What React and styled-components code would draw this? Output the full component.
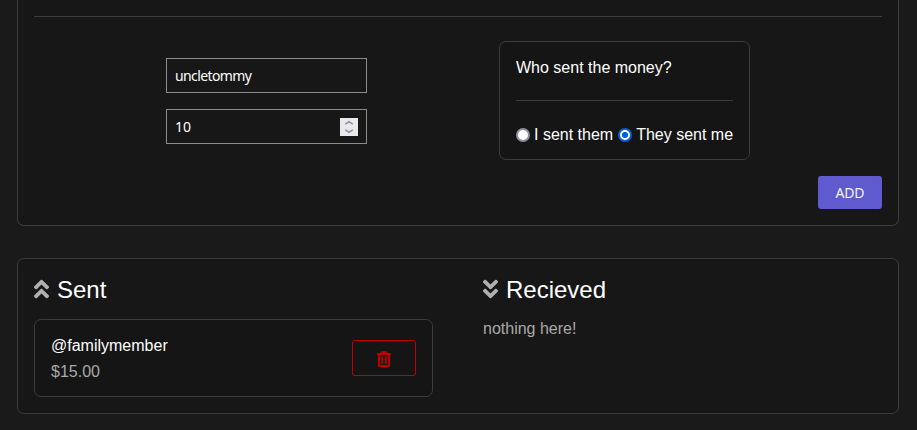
import React, { useState } from "react";
import styled, { createGlobalStyle } from "styled-components";
import { FaAngleDoubleUp, FaAngleDoubleDown } from "react-icons/fa";

const GlobalStyle = createGlobalStyle`
  *, *::before, *::after { box-sizing: border-box; }
  html, body { margin: 0; background: #1a1a1a; overflow: hidden; }
  body { font-family: "Liberation Sans", Arial, sans-serif; font-size: 16px; color: #fff; }
`;

const Page = styled.main`
  display: flex;
  flex-direction: column;
  gap: 32px;
  height: 430px;
  padding: 0 18px 0 17px;
  overflow: hidden;
`;

const Card = styled.section`
  flex: none;
  background: #171717;
  border: 1px solid #3c3c3c;
  border-radius: 7px;
  padding: 16px;
`;

const FormCard = styled(Card)`
  height: 226px;
  border-top: 0;
  border-top-left-radius: 0;
  border-top-right-radius: 0;
`;

const Rule = styled.hr`
  height: 1px;
  margin: 0;
  border: 0;
  background: #3c3c3c;
`;

const FormRow = styled.div`
  display: flex;
  gap: 132px;
  height: 119px;
  margin: 24px 0 16px;
  padding-left: 132px;
`;

const Fields = styled.div`
  display: flex;
  flex-direction: column;
  justify-content: flex-start;
  gap: 16px;
  width: 201px;
  padding-top: 17px;
`;

const Field = styled.label`
  display: flex;
  align-items: center;
  height: 35px;
  padding: 0 8px;
  border: 1px solid #8c8c8c;
`;

const Input = styled.input`
  flex: 1;
  min-width: 0;
  height: 20px;
  padding: 0;
  border: 0;
  outline: 0;
  background: transparent;
  color: #fff;
  font: 14px/20px "Noto Sans", sans-serif;
  letter-spacing: ${(p) => p.$tracking || "0"};
`;

const Spinner = styled.span`
  display: flex;
  flex: none;
  width: 18px;
  height: 18px;
  background: #e9e9ed;
`;

const Choice = styled.div`
  width: 251px;
  background: #151515;
  border: 1px solid #3c3c3c;
  border-radius: 7px;
  padding: 16px;
`;

const Question = styled.p`
  margin: 0 0 23px;
  line-height: 19px;
`;

const Options = styled.div`
  display: flex;
  align-items: center;
  margin-top: 24px;
  height: 19px;
  white-space: nowrap;
`;

const Option = styled.label`
  display: flex;
  align-items: center;
  gap: 4px;
  margin-right: 5px;
  line-height: 19px;
`;

const Radio = styled.input`
  appearance: none;
  flex: none;
  width: 14px;
  height: 14px;
  margin: 1px 0 0;
  border: 2px solid #8f8f9d;
  border-radius: 50%;
  background: #fff;

  &:checked {
    border-color: #0061e0;
    background: radial-gradient(circle, #0061e0 0 2.7px, #fff 3.4px);
  }
`;

const Actions = styled.div`
  display: flex;
  justify-content: flex-end;
`;

const AddButton = styled.button`
  width: 64px;
  height: 33px;
  padding: 1px 0 0;
  border: 0;
  border-radius: 3px;
  background: #5f5acd;
  color: #f4f4fb;
  font: 14px/20px "Noto Sans", sans-serif;
  letter-spacing: -0.2px;
`;

const Ledger = styled(Card)`
  display: grid;
  grid-template-columns: 399px 399px;
  column-gap: 50px;
  height: 156px;
`;

const Heading = styled.h2`
  display: flex;
  align-items: center;
  gap: 8px;
  height: 28px;
  margin: 0 0 16px;
  font-size: 24px;
  font-weight: 400;
  line-height: 28px;

  svg {
    flex: none;
    width: 15px;
    color: #b0b0b0;
  }

  span { padding-top: 2px; }
`;

const Entry = styled.article`
  display: flex;
  align-items: center;
  justify-content: space-between;
  height: 78px;
  padding: 0 16px;
  border: 1px solid #3c3c3c;
  border-radius: 7px;
  background: #151515;
`;

const Person = styled.div`
  padding-top: 2px;
  line-height: 18px;
`;

const Muted = styled.p`
  margin: ${(p) => p.$top || "0"} 0 0;
  color: #a9a9a9;
  line-height: 18px;
`;

const DeleteButton = styled.button`
  display: flex;
  align-items: center;
  justify-content: center;
  width: 64px;
  height: 36px;
  padding: 2px 0 0;
  border: 1px solid #c00000;
  border-radius: 3px;
  background: transparent;
  color: #c00000;
`;

function TrashIcon() {
  return (
    <svg width="14" height="16" viewBox="0 0 14 16" fill="currentColor">
      <path d="M0 2h3.6L4.6.5Q5 0 5.6 0h2.8q.6 0 1 .5L10.400 2H14v2h-1v10.500q0 1.500-1.500 1.500h-9Q1 16 1 14.500V4H0zM3 4v10h8V4z" fillRule="evenodd" />
      <path d="M4.300 5.200h1.800v7.800H4.300zM7.900 5.200h1.800v7.800H7.900z" />
    </svg>
  );
}

export default function App() {
  const [name, setName] = useState("uncletommy");
  const [amount, setAmount] = useState("10");
  const [sender, setSender] = useState("them");

  return (
    <>
      <GlobalStyle />
      <Page>
        <FormCard>
          <Rule />
          <FormRow>
            <Fields>
              <Field>
                <Input $tracking="-0.6px" value={name} onChange={(e) => setName(e.target.value)} />
              </Field>
              <Field>
                <Input value={amount} inputMode="numeric" onChange={(e) => setAmount(e.target.value)} />
                <Spinner>
                  <svg width="18" height="18" viewBox="0 0 18 18" fill="none" stroke="#8f8f9d" strokeWidth="1.5">
                    <path d="M5.700 6.500V6L9 3.600 12.300 6v.5M5.700 11.500v.5L9 14.400l3.300-2.400v-.5" />
                  </svg>
                </Spinner>
              </Field>
            </Fields>
            <Choice>
              <Question>Who sent the money?</Question>
              <Rule />
              <Options>
                <Option>
                  <Radio type="radio" name="sender" checked={sender === "me"} onChange={() => setSender("me")} />
                  I sent them
                </Option>
                <Option>
                  <Radio type="radio" name="sender" checked={sender === "them"} onChange={() => setSender("them")} />
                  They sent me
                </Option>
              </Options>
            </Choice>
          </FormRow>
          <Actions>
            <AddButton>ADD</AddButton>
          </Actions>
        </FormCard>
        <Ledger>
          <div>
            <Heading><FaAngleDoubleUp /><span>Sent</span></Heading>
            <Entry>
              <Person>
                @familymember
                <Muted $top="8px">$15.00</Muted>
              </Person>
              <DeleteButton aria-label="Delete"><TrashIcon /></DeleteButton>
            </Entry>
          </div>
          <div>
            <Heading><FaAngleDoubleDown /><span>Recieved</span></Heading>
            <Muted $top="17px">nothing here!</Muted>
          </div>
        </Ledger>
      </Page>
    </>
  );
}
